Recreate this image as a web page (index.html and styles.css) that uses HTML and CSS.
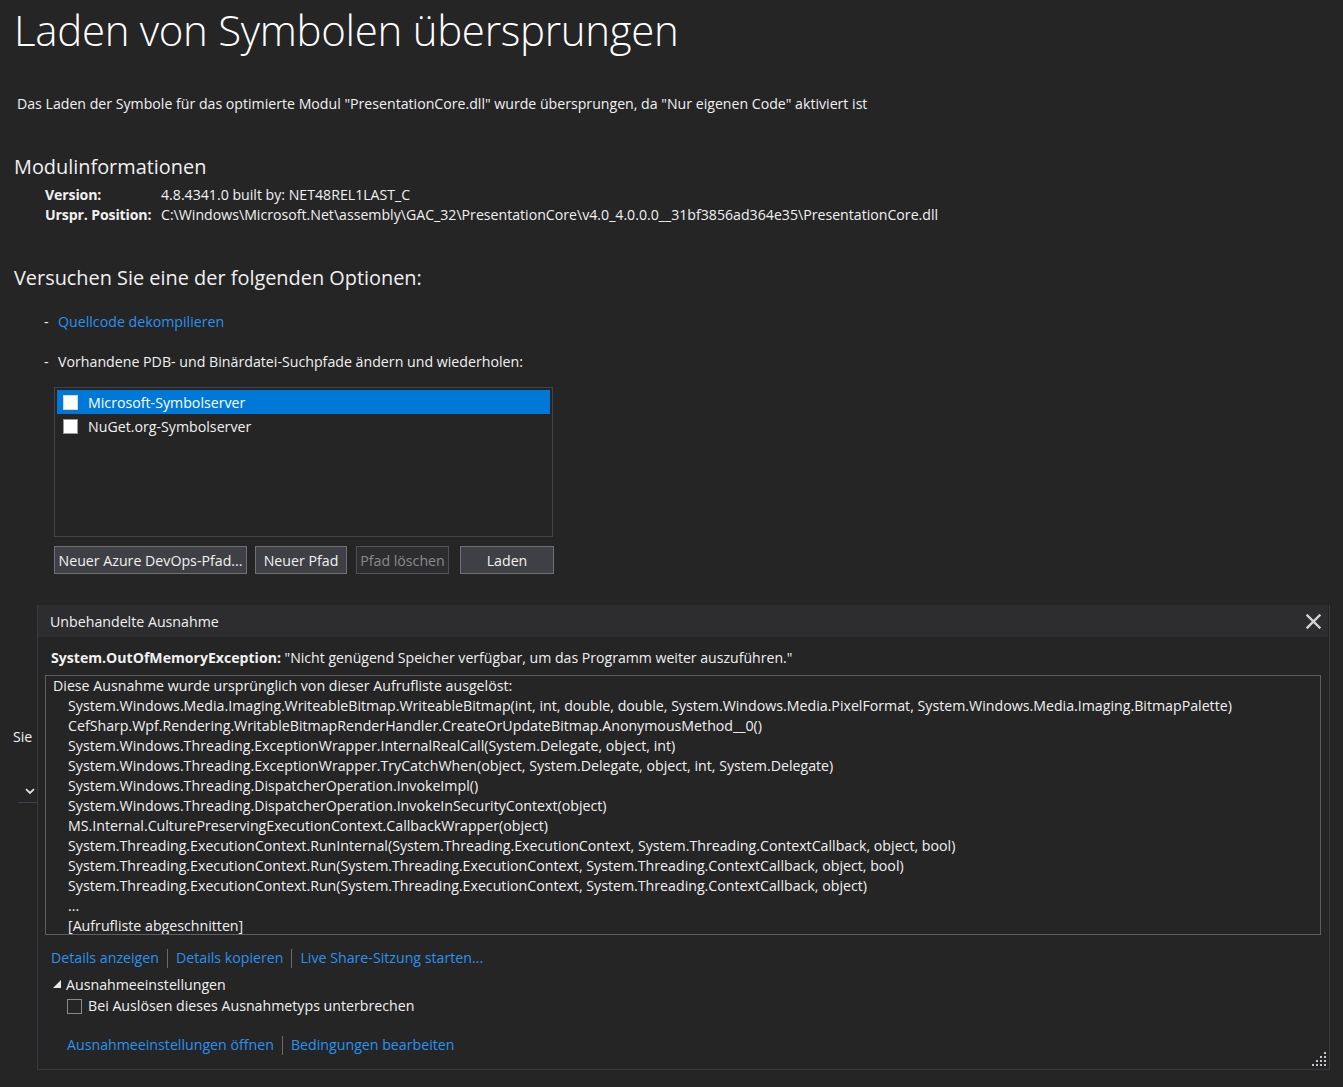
FILE: index.html
```html
<!DOCTYPE html>
<html lang="de">
<head>
<meta charset="utf-8">
<title>Laden von Symbolen übersprungen</title>
<link rel="stylesheet" href="styles.css">
</head>
<body>
<div class="page">
  <h1 class="title">Laden von Symbolen übersprungen</h1>
  <p class="intro">Das Laden der Symbole für das optimierte Modul "PresentationCore.dll" wurde übersprungen, da "Nur eigenen Code" aktiviert ist</p>

  <h2 class="h2 h2-mod">Modulinformationen</h2>
  <div class="info">
    <div class="info-label">Version:</div>
    <div class="info-value">4.8.4341.0 built by: NET48REL1LAST_C</div>
    <div class="info-label">Urspr. Position:</div>
    <div class="info-value">C:\Windows\Microsoft.Net\assembly\GAC_32\PresentationCore\v4.0_4.0.0.0__31bf3856ad364e35\PresentationCore.dll</div>
  </div>

  <h2 class="h2 h2-opt">Versuchen Sie eine der folgenden Optionen:</h2>
  <div class="option opt1"><span class="dash">-</span><a class="link" href="#">Quellcode dekompilieren</a></div>
  <div class="option opt2"><span class="dash">-</span><span>Vorhandene PDB- und Binärdatei-Suchpfade ändern und wiederholen:</span></div>

  <div class="listbox">
    <div class="list-row selected"><span class="cb"></span><span>Microsoft-Symbolserver</span></div>
    <div class="list-row"><span class="cb"></span><span>NuGet.org-Symbolserver</span></div>
  </div>
  <div class="buttons">
    <button class="btn btn-azure">Neuer Azure DevOps-Pfad...</button>
    <button class="btn btn-new">Neuer Pfad</button>
    <button class="btn btn-del" disabled>Pfad löschen</button>
    <button class="btn btn-load">Laden</button>
  </div>

  <p class="behind">Sie</p>
  <div class="behind-select">
    <svg class="chev" width="10" height="7" viewBox="0 0 10 7"><path d="M1 1.2 L5 5 L9 1.2" fill="none" stroke="#e0e0e0" stroke-width="1.8"/></svg>
  </div>
</div>

<div class="popup">
  <div class="popup-head">
    <span>Unbehandelte Ausnahme</span>
    <svg class="close" width="15" height="15" viewBox="0 0 15 15"><path d="M1.5 1.5 L13.5 13.5 M13.5 1.5 L1.5 13.5" stroke="#d4d4d4" stroke-width="2.4" stroke-linecap="square"/></svg>
  </div>
  <div class="popup-body">
    <div class="msg"><b>System.OutOfMemoryException:</b> "Nicht genügend Speicher verfügbar, um das Programm weiter auszuführen."</div>
    <div class="trace">
      <div>Diese Ausnahme wurde ursprünglich von dieser Aufrufliste ausgelöst:</div>
      <div class="tl">System.Windows.Media.Imaging.WriteableBitmap.WriteableBitmap(int, int, double, double, System.Windows.Media.PixelFormat, System.Windows.Media.Imaging.BitmapPalette)</div>
      <div class="tl">CefSharp.Wpf.Rendering.WritableBitmapRenderHandler.CreateOrUpdateBitmap.AnonymousMethod__0()</div>
      <div class="tl">System.Windows.Threading.ExceptionWrapper.InternalRealCall(System.Delegate, object, int)</div>
      <div class="tl">System.Windows.Threading.ExceptionWrapper.TryCatchWhen(object, System.Delegate, object, int, System.Delegate)</div>
      <div class="tl">System.Windows.Threading.DispatcherOperation.InvokeImpl()</div>
      <div class="tl">System.Windows.Threading.DispatcherOperation.InvokeInSecurityContext(object)</div>
      <div class="tl">MS.Internal.CulturePreservingExecutionContext.CallbackWrapper(object)</div>
      <div class="tl">System.Threading.ExecutionContext.RunInternal(System.Threading.ExecutionContext, System.Threading.ContextCallback, object, bool)</div>
      <div class="tl">System.Threading.ExecutionContext.Run(System.Threading.ExecutionContext, System.Threading.ContextCallback, object, bool)</div>
      <div class="tl">System.Threading.ExecutionContext.Run(System.Threading.ExecutionContext, System.Threading.ContextCallback, object)</div>
      <div class="tl">...</div>
      <div class="tl">[Aufrufliste abgeschnitten]</div>
    </div>
    <div class="links links-top">
      <a class="link" href="#">Details anzeigen</a><span class="sep"></span><a class="link" href="#">Details kopieren</a><span class="sep"></span><a class="link" href="#">Live Share-Sitzung starten...</a>
    </div>
    <div class="settings-head">
      <svg class="tri" width="8" height="8" viewBox="0 0 8 8"><polygon points="8,0 8,8 0,8" fill="#e8e8e8"/></svg>
      <span>Ausnahmeeinstellungen</span>
    </div>
    <div class="settings-cb"><span class="cb2"></span><span>Bei Auslösen dieses Ausnahmetyps unterbrechen</span></div>
    <div class="links links-bottom">
      <a class="link" href="#">Ausnahmeeinstellungen öffnen</a><span class="sep"></span><a class="link" href="#">Bedingungen bearbeiten</a>
    </div>
  </div>
  <svg class="grip" width="14" height="14" viewBox="0 0 14 14" fill="#c3c7cf">
    <rect x="12" y="0" width="2" height="2"/>
    <rect x="8" y="4" width="2" height="2"/><rect x="12" y="4" width="2" height="2"/>
    <rect x="4" y="8" width="2" height="2"/><rect x="8" y="8" width="2" height="2"/><rect x="12" y="8" width="2" height="2"/>
    <rect x="0" y="12" width="2" height="2"/><rect x="4" y="12" width="2" height="2"/><rect x="8" y="12" width="2" height="2"/><rect x="12" y="12" width="2" height="2"/>
  </svg>
</div>
</body>
</html>
```
FILE: styles.css
```css
html, body {
  margin: 0;
  padding: 0;
  background: #252526;
  color: #f1f1f1;
  font-family: "Open Sans", "Noto Sans", sans-serif;
  height: 100%;
  overflow: hidden;
}

.page {
  position: relative;
  padding: 0;
}

.title {
  margin: 0;
  padding-left: 14px;
  font-size: 42px;
  font-weight: 300;
  line-height: 60px;
  color: #ffffff;
  letter-spacing: -0.3px;
}

.intro {
  margin: 34px 0 0 17px;
  font-size: 14.15px;
  line-height: 20px;
  color: #f1f1f1;
}

.h2 {
  margin: 0;
  padding-left: 14px;
  font-size: 19.9px;
  font-weight: 400;
  line-height: 28px;
  color: #f1f1f1;
}
.h2-mod { margin-top: 39px; }
.h2-opt { margin-top: 39px; }

.info {
  display: grid;
  grid-template-columns: 116px auto;
  margin: 4px 0 0 45px;
  font-size: 14.15px;
  line-height: 20px;
}
.info-label { font-weight: 700; letter-spacing: -0.15px; }

.option {
  display: flex;
  margin-left: 44px;
  font-size: 14.2px;
  line-height: 20px;
  margin-top: 20px;
}
.dash { width: 14px; }

.link {
  color: #2a92f0;
  text-decoration: none;
}

.listbox {
  margin: 15px 0 0 54px;
  width: 499px;
  height: 150px;
  box-sizing: border-box;
  border: 1px solid #434346;
  padding: 2px;
}
.list-row {
  display: flex;
  align-items: center;
  height: 24px;
  padding-left: 6px;
  gap: 10px;
  font-size: 14.2px;
  color: #f1f1f1;
}
.list-row + .list-row { height: 25px; }
.list-row.selected { background: #0078d7; color: #ffffff; }
.cb {
  width: 13px;
  height: 13px;
  background: #ffffff;
  border: 1px solid #9a9a9a;
}
.selected .cb { border-color: #cfd9e6; }

.buttons {
  display: flex;
  margin: 9px 0 0 54px;
  gap: 8px;
}
.btn {
  height: 28px;
  box-sizing: border-box;
  background: #3f3f46;
  border: 1px solid #707075;
  color: #f1f1f1;
  font-family: inherit;
  font-size: 14.2px;
  padding: 0 2px;
  white-space: nowrap;
}
.btn-azure { width: 193px; }
.btn-new { width: 92px; }
.btn-del { width: 93px; color: #8a8a8d; background: #2d2d30; border-color: #505055; margin-left: 1px; }
.btn-load { width: 94px; margin-left: 3px; }

.behind {
  margin: 153px 0 0 13px;
  font-size: 14.2px;
  line-height: 20px;
}
.behind-select {
  margin: 34px 0 0 18px;
  width: 30px;
  height: 22px;
  border-bottom: 1px solid #3f3f46;
  display: flex;
  align-items: center;
  padding-left: 7px;
  box-sizing: border-box;
}

/* popup overlay */
.popup {
  position: absolute;
  left: 37px;
  top: 605px;
  width: 1293px;
  height: 465px;
  box-sizing: border-box;
  background: #252526;
  border: 1px solid #3a3a3e;
  border-top: none;
}
.popup-head {
  display: flex;
  align-items: center;
  justify-content: space-between;
  height: 32px;
  margin-right: 1px;
  background: #2d2d30;
  padding: 0 7px 0 12px;
  font-size: 14.2px;
  color: #f1f1f1;
}
.popup-body {
  padding: 9px 8px 0 7px;
  font-size: 14.2px;
  color: #f1f1f1;
}
.msg {
  padding-left: 6px;
  font-size: 14.1px;
  line-height: 24px;
}
.msg b { font-weight: 700; }
.trace {
  margin-top: 5px;
  height: 260px;
  box-sizing: border-box;
  border: 1px solid #5d5d62;
  padding: 0 0 0 7px;
  line-height: 20px;
  overflow: hidden;
  font-size: 14.2px;
}
.tl { padding-left: 15px; }

.links {
  display: flex;
  align-items: center;
  font-size: 14.2px;
  line-height: 22px;
}
.links-top { margin-top: 12px; padding-left: 6px; }
.links-bottom { margin-top: 18px; padding-left: 22px; }
.sep {
  width: 1px;
  height: 19px;
  background: #6a6a6e;
  margin: 0 8px;
}

.settings-head {
  display: flex;
  align-items: center;
  gap: 5px;
  padding-left: 8px;
  margin-top: 5px;
  line-height: 22px;
}
.tri { margin-top: -2px; }
.settings-cb {
  display: flex;
  align-items: center;
  gap: 6px;
  padding-left: 22px;
  line-height: 20px;
}
.cb2 {
  width: 13px;
  height: 13px;
  border: 1px solid #8a8a8e;
}

.grip {
  position: absolute;
  right: 3px;
  bottom: 3px;
}
```
